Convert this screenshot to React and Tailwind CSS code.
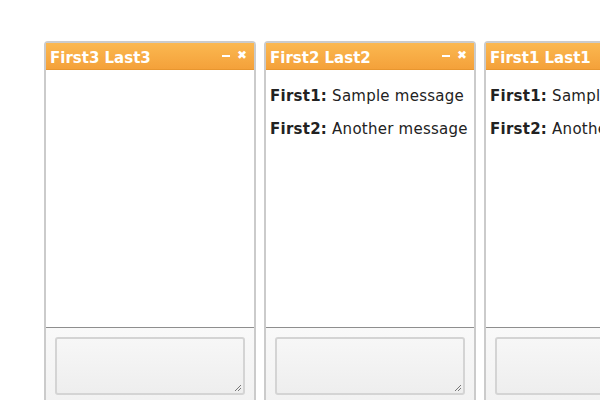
export default function App() {
  const panels = [
    { name: "First3 Last3", msgs: [] },
    { name: "First2 Last2", msgs: [["First1", "Sample message"], ["First2", "Another message"]] },
    { name: "First1 Last1", msgs: [["First1", "Sample message"], ["First2", "Another message"]] },
  ];
  return (
    <div className="w-[600px] h-[400px] overflow-hidden bg-white" style={{ fontFamily: '"DejaVu Sans", sans-serif' }}>
      <div className="flex gap-[8px] pl-[44px] pt-[41px]">
        {panels.map((p, i) => (
          <div key={i} className="w-[212px] shrink-0 h-[380px] flex flex-col border-2 border-[#cbcbcb] rounded-t-[4px] bg-white">
            <div className="h-[27px] shrink-0 flex items-center justify-between pl-[4px] pr-[7px] bg-gradient-to-b from-[#fbb850] to-[#f4a13a] border-b border-[#e8962f]">
              <span className="text-white font-bold text-[15px] leading-none mt-[5px]">{p.name}</span>
              <span className="flex items-center gap-[7px] text-white font-bold -mt-[2px]">
                <span className="block w-[8px] h-[2px] bg-white mt-[1px]" />
                <span className="text-[12px] leading-none">✖</span>
              </span>
            </div>
            <div className="h-[257px] shrink-0 px-[4px] pt-[15px] text-[#222] text-[15px] tracking-[0.25px]">
              {p.msgs.map((m, j) => (
                <div key={j} className="h-[33px] whitespace-nowrap leading-[22px]">
                  <span className="font-bold">{m[0]}:</span> {m[1]}
                </div>
              ))}
            </div>
            <div className="flex-1 border-t border-[#8e8e8e] bg-gradient-to-b from-[#f9f9f9] to-[#f0f0f0] px-[9px] pt-[9px]">
              <div className="relative h-[58px] rounded-[3px] border-2 border-[#d4d4d4] bg-gradient-to-b from-[#f7f7f7] to-[#eeeeee]">
                <svg className="absolute right-[1px] bottom-[1px]" width="9" height="9" viewBox="0 0 9 9">
                  <path d="M8 2 L2 8 M8 5 L5 8" stroke="#777" strokeWidth="1" />
                </svg>
              </div>
            </div>
          </div>
        ))}
      </div>
    </div>
  );
}
